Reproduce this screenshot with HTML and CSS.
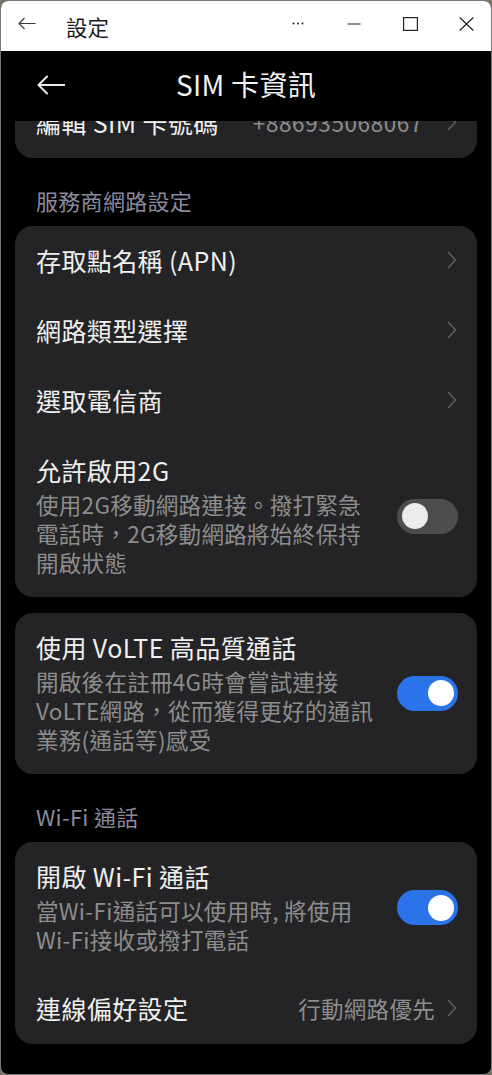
FILE: index.html
```html
<!DOCTYPE html>
<html lang="zh-Hant">
<head>
<meta charset="utf-8">
<title>設定</title>
<link rel="stylesheet" href="styles.css">
</head>
<body>
<div class="window">
  <header class="titlebar">
    <div class="tb-back">
      <svg width="18" height="13" viewBox="0 0 18 13"><path d="M17.5 6.5H1M6.5 1L1 6.5L6.5 12" fill="none" stroke="#3a3a3a" stroke-width="1.1"/></svg>
    </div>
    <span class="tb-title">設定</span>
    <div class="tb-controls">
      <span class="tb-btn"><svg width="12" height="3" viewBox="0 0 12 3"><circle cx="1.5" cy="1.5" r="1" fill="#222"/><circle cx="6" cy="1.5" r="1" fill="#222"/><circle cx="10.5" cy="1.5" r="1" fill="#222"/></svg></span>
      <span class="tb-btn"><svg width="14" height="2" viewBox="0 0 14 2"><path d="M0.5 1H13.5" stroke="#222" stroke-width="1.2"/></svg></span>
      <span class="tb-btn"><svg width="15" height="14" viewBox="0 0 15 14"><rect x="0.6" y="0.6" width="13.8" height="12.8" fill="none" stroke="#222" stroke-width="1.2"/></svg></span>
      <span class="tb-btn"><svg width="15" height="14" viewBox="0 0 15 14"><path d="M0.7 0.5L14.3 13.5M14.3 0.5L0.7 13.5" stroke="#222" stroke-width="1.2"/></svg></span>
    </div>
  </header>

  <main class="app">
    <div class="appbar">
      <div class="appbar-back">
        <svg width="28" height="20" viewBox="0 0 28 20"><path d="M27.5 10H2M10 1.5L1.5 10L10 18.5" fill="none" stroke="#e8e8e8" stroke-width="2" stroke-linecap="round" stroke-linejoin="round"/></svg>
      </div>
      <h1 class="appbar-title">SIM 卡資訊</h1>
      <div></div>
    </div>

    <div class="scroll">
      <div class="scroll-content">
        <section class="card card-scrolled">
          <div class="row link-row">
            <span class="row-title">編輯 SIM 卡號碼</span>
            <span class="row-value row-number">+886935068067</span>
            <svg class="chev" width="10" height="18" viewBox="0 0 10 18"><path d="M1.5 1.5L8.5 9L1.5 16.5" fill="none" stroke="#5c5c5c" stroke-width="1.8" stroke-linecap="round" stroke-linejoin="round"/></svg>
          </div>
        </section>

        <h2 class="section-label">服務商網路設定</h2>
        <section class="card">
          <div class="row link-row">
            <span class="row-title">存取點名稱 (APN)</span>
            <svg class="chev" width="10" height="18" viewBox="0 0 10 18"><path d="M1.5 1.5L8.5 9L1.5 16.5" fill="none" stroke="#5c5c5c" stroke-width="1.8" stroke-linecap="round" stroke-linejoin="round"/></svg>
          </div>
          <div class="row link-row">
            <span class="row-title">網路類型選擇</span>
            <svg class="chev" width="10" height="18" viewBox="0 0 10 18"><path d="M1.5 1.5L8.5 9L1.5 16.5" fill="none" stroke="#5c5c5c" stroke-width="1.8" stroke-linecap="round" stroke-linejoin="round"/></svg>
          </div>
          <div class="row link-row">
            <span class="row-title">選取電信商</span>
            <svg class="chev" width="10" height="18" viewBox="0 0 10 18"><path d="M1.5 1.5L8.5 9L1.5 16.5" fill="none" stroke="#5c5c5c" stroke-width="1.8" stroke-linecap="round" stroke-linejoin="round"/></svg>
          </div>
          <div class="row toggle-row">
            <div class="row-text">
              <div class="row-title">允許啟用2G</div>
              <div class="row-sub">使用2G移動網路連接。撥打緊急<br>電話時，2G移動網路將始終保持<br>開啟狀態</div>
            </div>
            <span class="toggle"><span class="knob"></span></span>
          </div>
        </section>

        <section class="card card-gap">
          <div class="row toggle-row">
            <div class="row-text">
              <div class="row-title">使用 VoLTE 高品質通話</div>
              <div class="row-sub">開啟後在註冊4G時會嘗試連接<br>VoLTE網路，從而獲得更好的通訊<br>業務(通話等)感受</div>
            </div>
            <span class="toggle on"><span class="knob"></span></span>
          </div>
        </section>

        <h2 class="section-label">Wi-Fi 通話</h2>
        <section class="card">
          <div class="row toggle-row">
            <div class="row-text">
              <div class="row-title">開啟 Wi-Fi 通話</div>
              <div class="row-sub">當Wi-Fi通話可以使用時, 將使用<br>Wi-Fi接收或撥打電話</div>
            </div>
            <span class="toggle on"><span class="knob"></span></span>
          </div>
          <div class="row link-row">
            <span class="row-title">連線偏好設定</span>
            <span class="row-value">行動網路優先</span>
            <svg class="chev" width="10" height="18" viewBox="0 0 10 18"><path d="M1.5 1.5L8.5 9L1.5 16.5" fill="none" stroke="#5c5c5c" stroke-width="1.8" stroke-linecap="round" stroke-linejoin="round"/></svg>
          </div>
        </section>
      </div>
    </div>
  </main>
</div>
</body>
</html>
```

FILE: styles.css
```css
* { box-sizing: border-box; }

html, body {
  margin: 0;
  padding: 0;
  width: 492px;
  height: 1075px;
  overflow: hidden;
  background: #7c7364;
}

body {
  font-family: "Noto Sans CJK TC", "Noto Sans", sans-serif;
}

.window {
  width: 492px;
  height: 1075px;
  border: 1px solid #7a7a7a;
  border-radius: 8px;
  overflow: hidden;
  display: flex;
  flex-direction: column;
  background: #000;
}

/* ---------- Windows title bar ---------- */
.titlebar {
  height: 50px;
  flex: none;
  background: #fff;
  display: flex;
  align-items: center;
}

.tb-back {
  width: 65px;
  padding-left: 17px;
  padding-bottom: 6px;
  display: flex;
  align-items: center;
}

.tb-title {
  font-size: 21.5px;
  color: #1b1b1b;
  line-height: 1;
  padding-top: 1px;
}

.tb-controls {
  margin-left: auto;
  margin-right: -3px;
  display: flex;
  align-items: center;
  padding-bottom: 5px;
}

.tb-btn {
  width: 56px;
  height: 30px;
  display: flex;
  align-items: center;
  justify-content: center;
}

/* ---------- App ---------- */
.app {
  flex: 1;
  display: flex;
  flex-direction: column;
  min-height: 0;
  color: #f0f0f0;
}

.appbar {
  height: 70px;
  flex: none;
  display: grid;
  grid-template-columns: 1fr auto 1fr;
  align-items: center;
  padding-bottom: 3px;
  background: #000;
  position: relative;
  z-index: 1;
}

.appbar-back {
  padding-left: 36px;
  display: flex;
  align-items: center;
}

.appbar-title {
  margin: 0;
  font-size: 28px;
  font-weight: 400;
  line-height: 1.2;
  color: #f2f2f2;
  letter-spacing: 0.3px;
}

.scroll {
  flex: 1;
  min-height: 0;
  overflow: hidden;
}

.scroll-content {
  padding: 0 14px;
}

.card {
  background: #242426;
  border-radius: 18px;
  padding: 0 19px 0 21px;
}

.card-scrolled {
  margin-top: -33px;
}

.card-gap {
  margin-top: 16px;
}

.section-label {
  margin: 29px 0 13px;
  padding-left: 21px;
  font-size: 22px;
  font-weight: 400;
  line-height: 26px;
  color: #8b8a9c;
  letter-spacing: 0.3px;
}

.row {
  display: flex;
  align-items: center;
}

.link-row {
  height: 70px;
  padding-bottom: 2px;
  gap: 12px;
}

.link-row .chev {
  margin-right: 1px;
  flex: none;
}

.row-title {
  font-size: 25px;
  line-height: 30px;
  color: #f0f0f0;
  letter-spacing: 0.4px;
}

.link-row .row-title {
  flex: 1;
  white-space: nowrap;
}

.row-value {
  font-size: 22.5px;
  color: #8d8d8d;
  letter-spacing: 0.3px;
  white-space: nowrap;
}

.row-number {
  letter-spacing: 0.6px;
  margin-right: 12px;
}

.toggle-row {
  padding: 19px 0 20px;
  gap: 4px;
}

.row-text {
  flex: 1;
  min-width: 0;
  display: flex;
  flex-direction: column;
  gap: 5px;
}

.row-sub {
  font-size: 22.5px;
  line-height: 29px;
  color: #8d8d8d;
  letter-spacing: 0.3px;
  white-space: nowrap;
}

.toggle {
  flex: none;
  width: 61px;
  height: 35px;
  border-radius: 18px;
  background: #4d4d4f;
  display: flex;
  align-items: center;
  padding: 0 4.5px;
}

.toggle .knob {
  width: 26px;
  height: 26px;
  border-radius: 50%;
  background: #ececec;
}

.toggle.on {
  background: #2a73e8;
  justify-content: flex-end;
}

.toggle.on .knob {
  background: #ffffff;
}
```
